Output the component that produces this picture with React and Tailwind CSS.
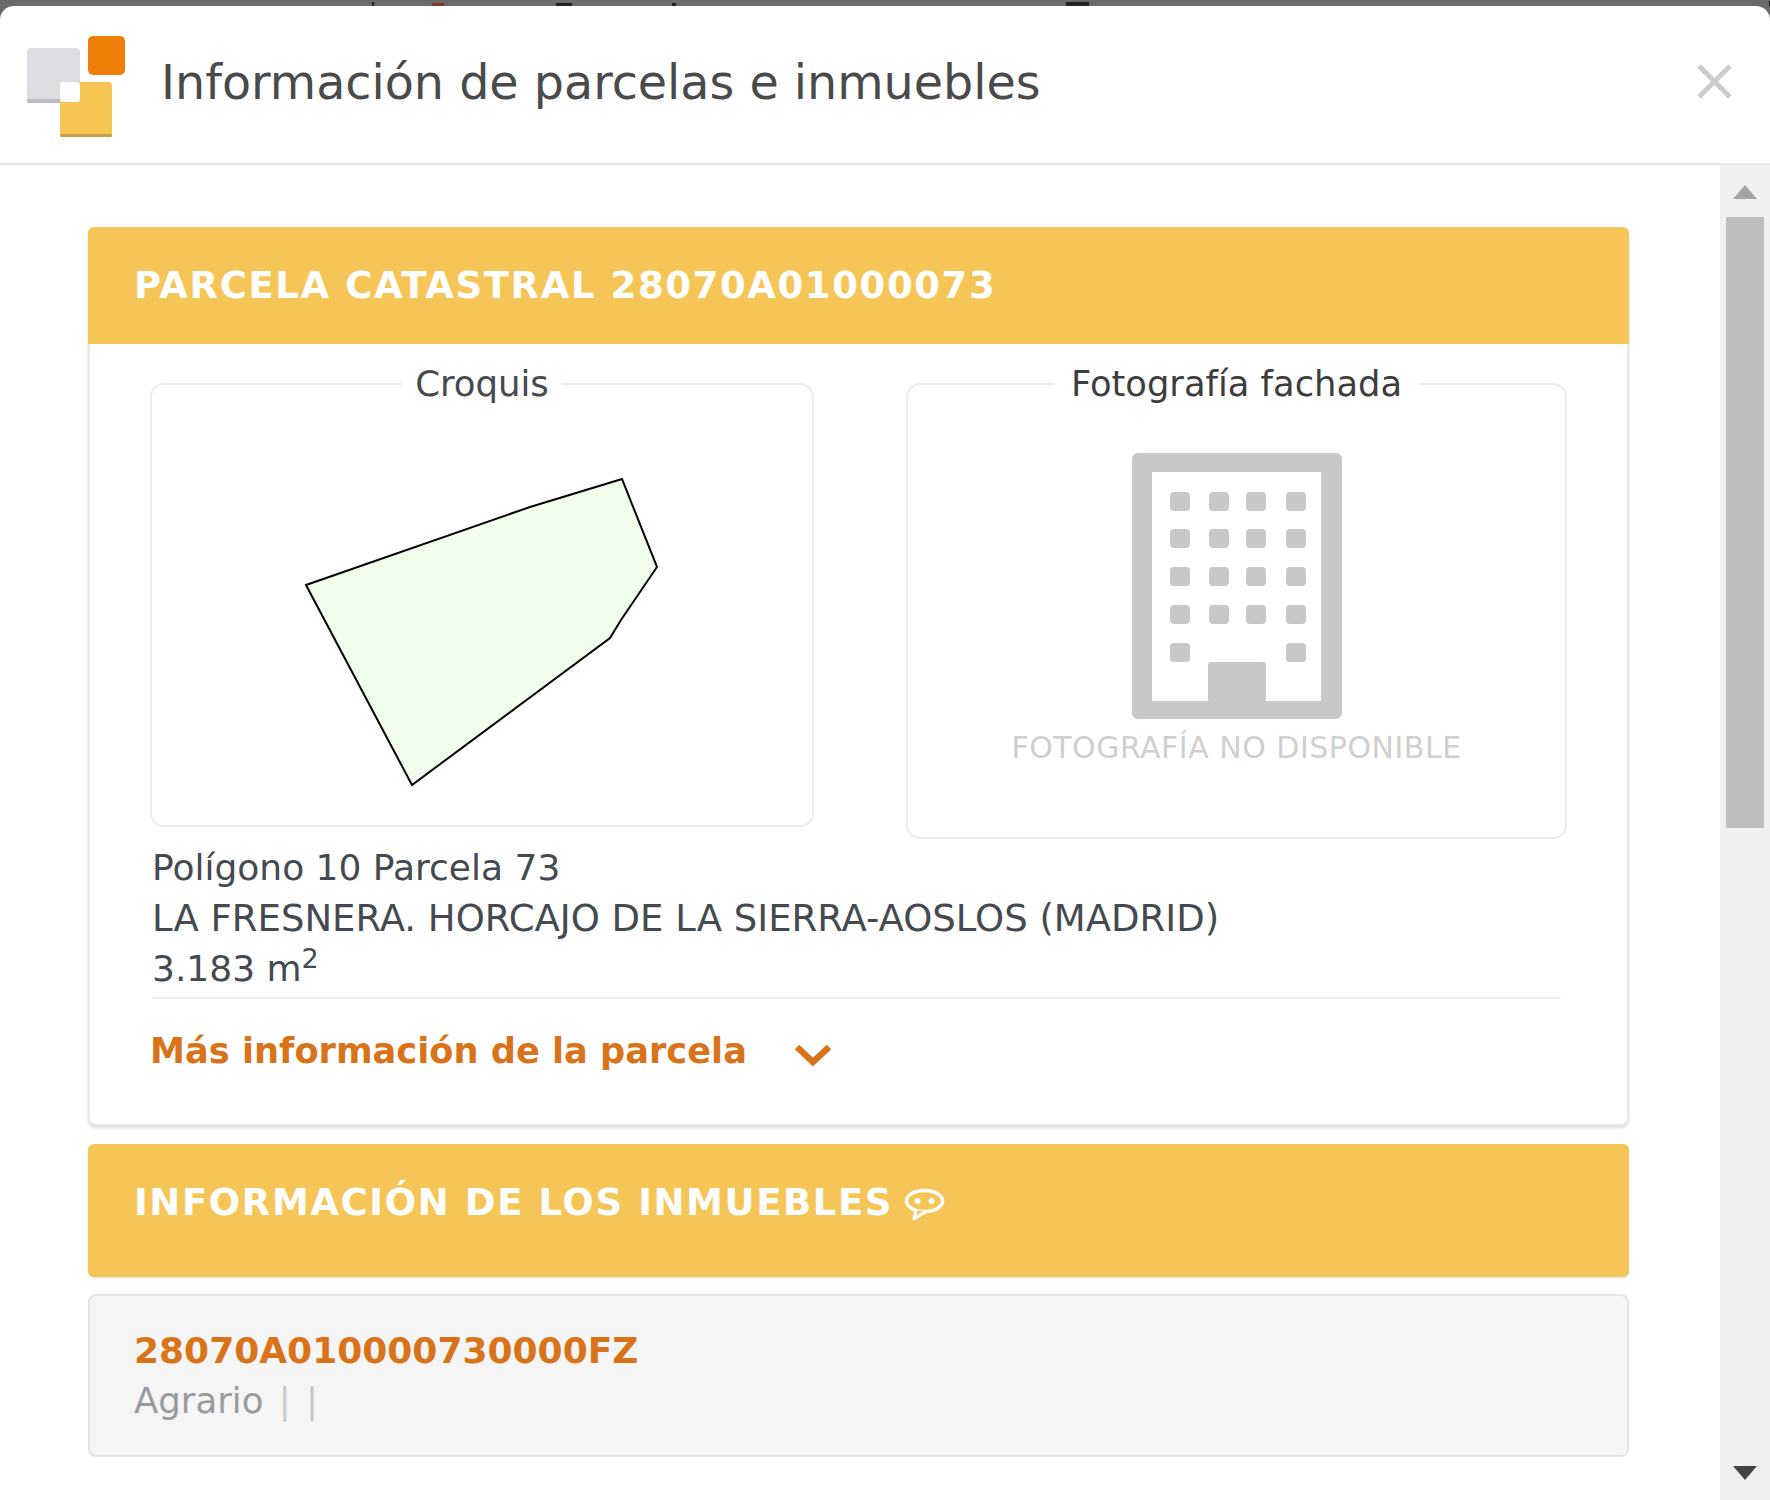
const windows = [
  [1169, 493], [1208, 493], [1245, 493], [1285, 493],
  [1169, 530], [1208, 530], [1245, 530], [1285, 530],
  [1169, 568], [1208, 568], [1245, 568], [1285, 568],
  [1169, 606], [1208, 606], [1245, 606], [1285, 606],
  [1169, 644], [1285, 644],
];

function Logo() {
  return (
    <svg width="98" height="101" viewBox="0 0 98 101" className="shrink-0">
      <rect x="0" y="12" width="53" height="55" rx="4" fill="#dcdde0" />
      <rect x="0" y="63" width="34" height="4" fill="#a9a9a9" opacity="0.6" />
      <rect x="33" y="46" width="52" height="55" rx="4" fill="#f6c654" />
      <rect x="33" y="98" width="52" height="3" rx="1.5" fill="#c99f45" />
      <rect x="33" y="46" width="20" height="20" rx="3" fill="#ffffff" />
      <rect x="61" y="0" width="37" height="39" rx="5" fill="#f07f09" />
    </svg>
  );
}

function Building() {
  return (
    <svg width="210" height="266" viewBox="1131 454 210 266" className="mx-auto block">
      <path
        fillRule="evenodd"
        d="M1137 454h198a6 6 0 0 1 6 6v254a6 6 0 0 1-6 6h-198a6 6 0 0 1-6-6v-254a6 6 0 0 1 6-6zM1151 473v229h169v-229z"
        fill="#c8c8c8"
      />
      <rect x="1207" y="663" width="58" height="40" rx="3" fill="#c8c8c8" />
      {windows.map(([x, y]) => (
        <rect key={`${x}-${y}`} x={x} y={y} width="20" height="19" rx="4" fill="#c8c8c8" />
      ))}
    </svg>
  );
}

function Parcel() {
  return (
    <svg width="356" height="311" viewBox="304 477 356 311" className="mx-auto block">
      <polygon
        points="306,585 530,507 622,479 657,567 621,620 610,638 412,785"
        fill="#effdea"
        stroke="#000000"
        strokeWidth="2"
      />
    </svg>
  );
}

function Bubble() {
  return (
    <svg width="41" height="32" viewBox="0 0 41 32" className="shrink-0">
      <ellipse cx="20.5" cy="13" rx="18" ry="10.5" fill="none" stroke="#ffffff" strokeWidth="3.5" />
      <path d="M12 22 L10 31 L21 24" fill="#f6c557" stroke="#ffffff" strokeWidth="3" strokeLinejoin="round" />
      <circle cx="13.5" cy="13" r="3" fill="#ffffff" />
      <circle cx="27.5" cy="13" r="3" fill="#ffffff" />
    </svg>
  );
}

export default function App() {
  return (
    <div className="w-[1770px] h-[1500px] overflow-hidden bg-[#6a6a6a] font-['DejaVu_Sans',sans-serif]">
      <div className="h-[6px] flex overflow-hidden">
        <span className="ml-[372px] mt-[2px] w-[4px] h-[4px] bg-[#222]" />
        <span className="ml-[58px] mt-[3px] w-[20px] h-[3px] bg-[#7a3a2a]" />
        <span className="ml-[112px] mt-[3px] w-[28px] h-[3px] bg-[#222]" />
        <span className="ml-[100px] mt-[3px] w-[6px] h-[3px] bg-[#222]" />
        <span className="ml-[390px] mt-[2px] w-[40px] h-[4px] bg-[#222]" />
        <span className="ml-[680px] mt-[1px] w-[2px] h-[5px] bg-[#111]" />
      </div>
      <div className="h-[1494px] bg-white rounded-t-[14px] flex flex-col overflow-hidden">
        <header className="h-[159px] shrink-0 flex items-center border-b-2 border-[#e8e8e8] pl-[27px] pr-[38px]">
          <span className="mt-[3px]">
            <Logo />
          </span>
          <h1 className="ml-[36px] text-[47.6px] leading-none font-normal text-[#4a4a4a] -mt-[3px]">
            Información de parcelas e inmuebles
          </h1>
          <svg width="35" height="35" viewBox="0 0 35 35" className="ml-auto -mt-[6px]">
            <path d="M2 2 L33 33 M33 2 L2 33" stroke="#cccccc" strokeWidth="5" />
          </svg>
        </header>
        <div className="flex-1 flex min-h-0">
          <main className="w-[1720px] pl-[88px] pr-[91px] pt-[62px]">
            <section className="bg-white rounded-[8px] border-2 border-[#e8e8e8] shadow-[0_2px_3px_#dddddd] h-[899px]">
              <div className="h-[117px] -m-[2px] mb-0 bg-[#f6c557] rounded-t-[6px] flex items-center pl-[46px]">
                <h2 className="text-[37px] leading-none font-bold text-white tracking-[1.6px]">
                  PARCELA CATASTRAL 28070A01000073
                </h2>
              </div>
              <div className="px-[60px] pt-[18px]">
                <div className="flex justify-between items-start">
                  <fieldset className="w-[664px] h-[465px] border-2 border-[#ececec] rounded-[14px]">
                    <legend className="mx-auto px-[13px] text-[35.5px] leading-[44px] text-[#444a50]">Croquis</legend>
                    <div className="pt-[71px]">
                      <Parcel />
                    </div>
                  </fieldset>
                  <fieldset className="w-[661px] h-[477px] border-2 border-[#ececec] rounded-[14px]">
                    <legend className="mx-auto px-[17px] text-[35.3px] leading-[44px] text-[#3d3d3d]">Fotografía fachada</legend>
                    <div className="pt-[47px]">
                      <Building />
                      <p className="mt-[12px] text-center text-[30px] leading-[34px] text-[#cfcfcf] tracking-[0.5px]">
                        FOTOGRAFÍA NO DISPONIBLE
                      </p>
                    </div>
                  </fieldset>
                </div>
                <div className="mt-[4px] pl-[2px] text-[36px] leading-[50.5px] text-[#444a50]">
                  <p>Polígono 10 Parcela 73</p>
                  <p className="text-[37px]">LA FRESNERA. HORCAJO DE LA SIERRA-AOSLOS (MADRID)</p>
                  <p>
                    3.183 m<sup>2</sup>
                  </p>
                </div>
                <div className="border-t-2 border-[#f0f0f0] mt-[2px] ml-[2px] mr-[6px]" />
                <div className="flex items-center h-[107px] pb-[2px]">
                  <span className="text-[35.2px] leading-none font-bold text-[#d9731a]">Más información de la parcela</span>
                  <svg width="38" height="24" viewBox="0 0 38 24" className="ml-[47px] mt-[8px]">
                    <path d="M3 4 L19 19 L35 4" fill="none" stroke="#d9731a" strokeWidth="6.5" />
                  </svg>
                </div>
              </div>
            </section>
            <section className="mt-[18px] h-[133px] rounded-[6px] bg-[#f6c557] shadow-[0_1px_2px_#e6e0cc] flex items-start pl-[46px] pt-[39px]">
              <h2 className="text-[37px] leading-[40px] font-bold text-white tracking-[1.6px]">INFORMACIÓN DE LOS INMUEBLES</h2>
              <span className="ml-[11px] mt-[5px]">
                <Bubble />
              </span>
            </section>
            <section className="mt-[17px] h-[163px] rounded-[8px] border-2 border-[#e4e4e4] bg-[#f5f5f5] pl-[44px] pt-[30px]">
              <p className="text-[36px] leading-[50px] font-bold text-[#d9731a]">28070A010000730000FZ</p>
              <p className="text-[35.5px] leading-[50px] text-[#999ba0]">
                Agrario <span className="text-[#c9c9c9] ml-[4px]">|</span> <span className="text-[#c9c9c9] ml-[4px]">|</span>
              </p>
            </section>
          </main>
          <aside className="w-[50px] bg-[#f0f0f0] flex flex-col items-center">
            <svg width="24" height="14" viewBox="0 0 24 14" className="mt-[20px] shrink-0">
              <path d="M12 0 L24 14 H0 Z" fill="#a3a3a3" />
            </svg>
            <div className="mt-[18px] w-[38px] h-[611px] bg-[#bdbdbd]" />
            <svg width="24" height="14" viewBox="0 0 24 14" className="mt-auto mb-[20px] shrink-0">
              <path d="M12 14 L24 0 H0 Z" fill="#444444" />
            </svg>
          </aside>
        </div>
      </div>
    </div>
  );
}
